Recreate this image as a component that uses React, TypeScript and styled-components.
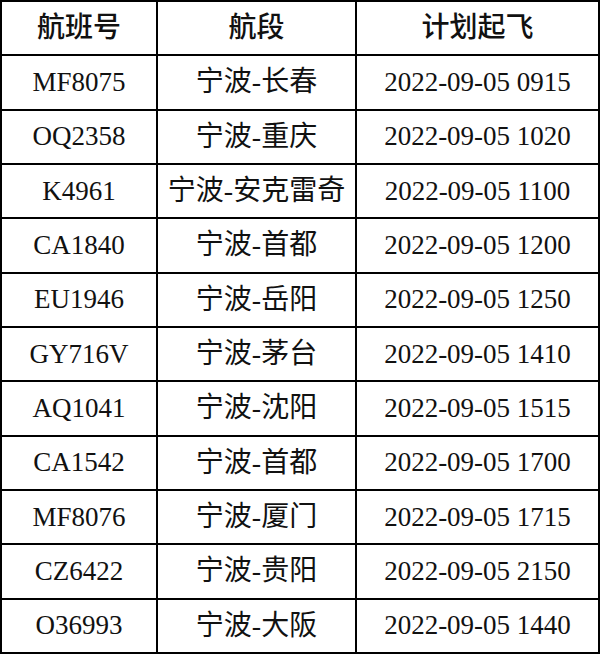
import React from "react";
import styled, { createGlobalStyle } from "styled-components";

type Flight = { no: string; route: string; time: string };

const flights: Flight[] = [
  { no: "MF8075", route: "宁波-长春", time: "2022-09-05 0915" },
  { no: "OQ2358", route: "宁波-重庆", time: "2022-09-05 1020" },
  { no: "K4961", route: "宁波-安克雷奇", time: "2022-09-05 1100" },
  { no: "CA1840", route: "宁波-首都", time: "2022-09-05 1200" },
  { no: "EU1946", route: "宁波-岳阳", time: "2022-09-05 1250" },
  { no: "GY716V", route: "宁波-茅台", time: "2022-09-05 1410" },
  { no: "AQ1041", route: "宁波-沈阳", time: "2022-09-05 1515" },
  { no: "CA1542", route: "宁波-首都", time: "2022-09-05 1700" },
  { no: "MF8076", route: "宁波-厦门", time: "2022-09-05 1715" },
  { no: "CZ6422", route: "宁波-贵阳", time: "2022-09-05 2150" },
  { no: "O36993", route: "宁波-大阪", time: "2022-09-05 1440" },
];

const App: React.FC = () => {
  return (
    <>
      <GlobalStyle />
      <Table>
        <Cell $head>航班号</Cell>
        <Cell $head>航段</Cell>
        <Cell $head>计划起飞</Cell>
        {flights.map((f, i) => (
          <React.Fragment key={i}>
            <Cell>{f.no}</Cell>
            <Cell $cjk>{f.route}</Cell>
            <Cell>{f.time}</Cell>
          </React.Fragment>
        ))}
      </Table>
    </>
  );
};

export default App;

const GlobalStyle = createGlobalStyle`
  html, body {
    margin: 0;
    padding: 0;
    background: #fff;
  }
`;

const Table = styled.div`
  display: grid;
  grid-template-columns: 156px 199px 243px;
  grid-template-rows: repeat(12, 1fr);
  width: 600px;
  height: 654px;
  box-sizing: border-box;
  border-top: 2px solid #000;
  border-left: 2px solid #000;
  background: #fff;
`;

const Cell = styled.div<{ $head?: boolean; $cjk?: boolean }>`
  display: flex;
  align-items: center;
  justify-content: center;
  border-right: 2px solid #000;
  border-bottom: 2px solid #000;
  font-family: "Liberation Serif", "Noto Sans CJK SC", serif;
  font-size: ${(p) => (p.$head || p.$cjk ? "28px" : "27px")};
  font-weight: ${(p) => (p.$head ? 500 : 400)};
  color: #111;
  white-space: nowrap;
  line-height: 1;
`;
